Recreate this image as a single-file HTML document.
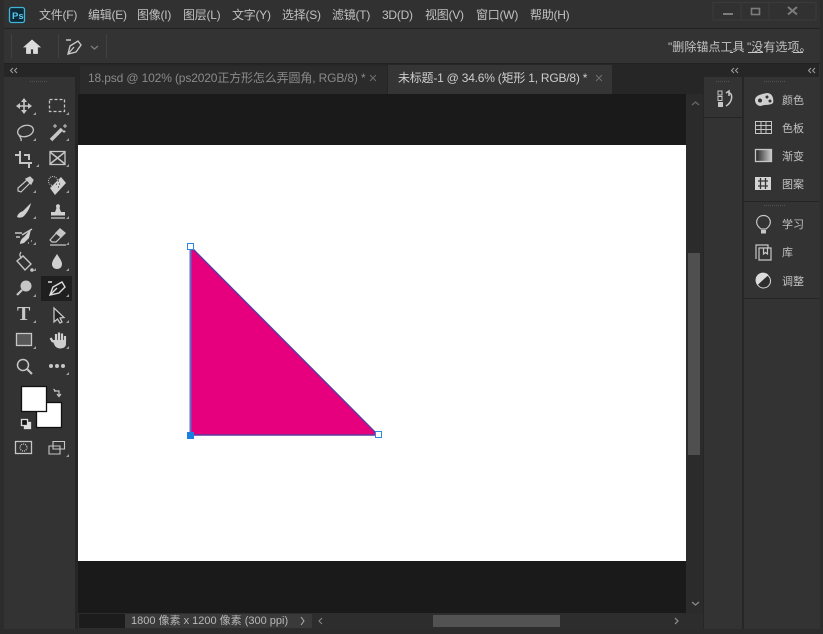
<!DOCTYPE html>
<html><head><meta charset="utf-8"><style>
html,body{margin:0;padding:0;background:#2b2b2b}
#r{position:relative;width:823px;height:634px;overflow:hidden;background:#323232;font-family:"Liberation Sans","Noto Sans CJK SC",sans-serif;color:#c8c8c8}
.a{position:absolute;white-space:nowrap}
.m{top:8px;font-size:12px;line-height:15px;color:#c0c0c0;letter-spacing:-.25px}
.p{left:782px;font-size:11px;line-height:14px;color:#c2c2c2}
svg{position:absolute;left:0;top:0}
</style></head><body><div id="r">
<div class="a" style="left:0;top:0;width:823px;height:28px;background:#313131"></div>
<div class="a" style="left:0;top:28px;width:823px;height:1px;background:#222"></div>
<div class="a" style="left:4px;top:29px;width:815px;height:34px;background:#333"></div>
<div class="a" style="left:0;top:63px;width:823px;height:1px;background:#222"></div>
<div class="a" style="left:0;top:0;width:4px;height:634px;background:#2c2c2c"></div>
<div class="a" style="left:820px;top:0;width:3px;height:634px;background:#2c2c2c"></div>
<div class="a" style="left:0;top:629px;width:823px;height:5px;background:#2c2c2c"></div>

<div class="a" style="left:76px;top:64px;width:628px;height:30px;background:#262626"></div>
<div class="a" style="left:80px;top:66px;width:307px;height:28px;background:#2b2b2b"></div>
<div class="a" style="left:388px;top:65px;width:224px;height:29px;background:#353535"></div>
<div class="a" style="left:4px;top:64px;width:71px;height:13px;background:#262626"></div>
<div class="a" style="left:704px;top:64px;width:38px;height:13px;background:#262626"></div>
<div class="a" style="left:744px;top:64px;width:75px;height:13px;background:#262626"></div>
<div class="a" style="left:4px;top:77px;width:71px;height:552px;background:#333"></div>
<div class="a" style="left:75px;top:64px;width:3px;height:565px;background:#262626"></div>
<div class="a" style="left:78px;top:94px;width:608px;height:519px;background:#1a1a1a"></div>
<div class="a" style="left:78px;top:145px;width:608px;height:416px;background:#fff"></div>
<div class="a" style="left:686px;top:94px;width:17px;height:519px;background:#2b2b2b"></div>
<div class="a" style="left:688px;top:253px;width:12px;height:202px;background:#4f4f4f"></div>
<div class="a" style="left:703px;top:64px;width:1px;height:565px;background:#262626"></div>
<div class="a" style="left:704px;top:77px;width:38px;height:552px;background:#333"></div>
<div class="a" style="left:704px;top:117px;width:38px;height:1px;background:#242424"></div>
<div class="a" style="left:742px;top:64px;width:2px;height:565px;background:#262626"></div>
<div class="a" style="left:744px;top:77px;width:75px;height:552px;background:#333"></div>
<div class="a" style="left:744px;top:201px;width:75px;height:1px;background:#242424"></div>
<div class="a" style="left:744px;top:298px;width:75px;height:1px;background:#242424"></div>
<div class="a" style="left:78px;top:613px;width:625px;height:16px;background:#2d2d2d"></div>
<div class="a" style="left:79px;top:614px;width:46px;height:14px;background:#1c1c1c"></div>
<div class="a" style="left:125px;top:614px;width:187px;height:14px;background:#3a3a3a"></div>
<div class="a" style="left:433px;top:615px;width:127px;height:12px;background:#525252"></div>

<div class="a m" style="left:39px">文件(F)</div>
<div class="a m" style="left:88px">编辑(E)</div>
<div class="a m" style="left:137px">图像(I)</div>
<div class="a m" style="left:183px">图层(L)</div>
<div class="a m" style="left:232px">文字(Y)</div>
<div class="a m" style="left:282px">选择(S)</div>
<div class="a m" style="left:332px">滤镜(T)</div>
<div class="a m" style="left:382px">3D(D)</div>
<div class="a m" style="left:425px">视图(V)</div>
<div class="a m" style="left:476px">窗口(W)</div>
<div class="a m" style="left:530px">帮助(H)</div>
<div class="a" style="left:668px;top:40px;font-size:12px;line-height:15px;color:#c2c2c2;word-spacing:-1px;letter-spacing:.05px">"删除锚点工具 "没有选项。</div>
<div class="a" style="left:88px;top:71px;font-size:12px;line-height:15px;color:#8a8a8a;letter-spacing:-.14px">18.psd @ 102% (ps2020正方形怎么弄圆角, RGB/8) *</div>
<div class="a" style="left:398px;top:71px;font-size:12px;line-height:15px;color:#cdcdcd;letter-spacing:-.22px">未标题-1 @ 34.6% (矩形 1, RGB/8) *</div>
<div class="a" style="left:131px;top:614px;font-size:11px;line-height:15px;color:#b8b8b8">1800 像素 x 1200 像素 (300 ppi)</div>
<div class="a p" style="top:94px">颜色</div>
<div class="a p" style="top:122px">色板</div>
<div class="a p" style="top:150px">渐变</div>
<div class="a p" style="top:178px">图案</div>
<div class="a p" style="top:218px">学习</div>
<div class="a p" style="top:246px">库</div>
<div class="a p" style="top:275px">调整</div>
<div class="a" style="left:17px;top:303px;font:bold 20px 'Liberation Serif',serif;line-height:22px;color:#c8c8c8">T</div>

<svg width="823" height="634" viewBox="0 0 823 634" fill="none" stroke="#c6c6c6" stroke-width="1.3">
<!-- Ps logo -->
<rect x="9.500" y="7.500" width="15" height="15" rx="2" fill="#0e2a38" stroke="#3fb4d8"/>
<text x="12" y="19" font-family="Liberation Sans" font-size="9.500" font-weight="bold" fill="#5cc8ee" stroke="none">Ps</text>
<!-- window -->
<path d="M713 2.500H816V20H713Z" stroke="#3a3a3a"/>
<path d="M741 3V20M769 3V20" stroke="#3a3a3a"/>
<path d="M723 14H733" stroke="#7c7c7c" stroke-width="2"/>
<rect x="751.500" y="8.500" width="8" height="6" stroke="#7c7c7c" stroke-width="1.600"/>
<path d="M788 7L797 14.500M797 7L788 14.500" stroke="#7c7c7c" stroke-width="2"/>
<!-- text underline marks -->
<path d="M748 52.500H763M793 52.500H803M730 52.500H733" stroke="#c8c8c8" stroke-width="1"/>
<!-- separators -->
<path d="M11.500 34V58M58.500 34V58M106.500 34V58" stroke="#404040"/>
<!-- home -->
<path d="M24 47L32 40L40 47H37.500V53.500H33.500V49H30.500V53.500H26.500V47Z" fill="#dcdcdc" stroke="#dcdcdc" stroke-width=".8"/>
<!-- option pen -->
<path d="M66 40H71M68 54L70 46L78 41L81 45L76 52Z" stroke-width="1.400"/><path d="M68 54L74 47"/><path d="M91 46L94.500 49L98 46" stroke="#7d7d7d"/>
<!-- chevrons -->
<g stroke="#a0a0a0" stroke-width="1"><path d="M13 68L10.500 70.500L13 73M17 68L14.500 70.500L17 73"/><path d="M734 68L731.500 70.500L734 73M738 68L735.500 70.500L738 73"/><path d="M811 68L808.500 70.500L811 73M815 68L812.500 70.500L815 73"/></g>
<g stroke="#505050" stroke-dasharray="1 1"><path d="M30 81.500H48M764 81.500H786M716 81.500H730M764 205.500H786"/></g>
<path d="M370 75L376 81M376 75L370 81M596 75L602 81M602 75L596 81" stroke="#6e6e6e" stroke-width="1"/>
<!-- move -->
<path d="M24 99V113M17 106H31" stroke-width="1.600"/><path d="M24 98L21 102H27ZM24 114L21 110H27ZM16 106L20 103V109ZM32 106L28 103V109Z" fill="#c6c6c6" stroke="none"/>
<rect x="49.500" y="99.500" width="15" height="12" stroke-dasharray="3 2"/>
<!-- lasso -->
<ellipse cx="25.500" cy="131" rx="8" ry="5.500" transform="rotate(-15 25.500 131)" stroke-width="1.300"/><path d="M19 135C20 138 22 138 21 141" stroke-width="1.300"/>
<!-- wand -->
<path d="M51 140L62 129" stroke-width="3.500"/>
<path d="M55 124V128M53 126H57M65 124V128M63 126H67M64 130V133M62.500 131.500H65.500" stroke-width="1"/>
<!-- crop -->
<path d="M15 155H20V163H31M20 151V155M24 155H29V160M29 163V168" stroke-width="2"/><path d="M31 162V164" stroke-width="2"/>
<rect x="50" y="151.500" width="15" height="13"/><path d="M50 152L65 164M65 152L50 164" stroke-width="1.500"/>
<!-- eyedropper -->
<path d="M18 191L18 188L27 180L30 183L21 192Z" stroke-width="1.200"/><path d="M26 179L30 177L33 180L31 184Z" fill="#c6c6c6" stroke="#c6c6c6"/>
<!-- heal -->
<path d="M50 188L61 177L66 183L55 195Z" fill="#d0d0d0" stroke="none"/><path d="M56 184h1M59 184h1M58 187h1M58 181h1" stroke="#333" stroke-width="1.200"/><circle cx="53" cy="181" r="4.500" stroke-dasharray="1 1" stroke-width="1"/>
<!-- brush -->
<path d="M17 217C18 213 21 212 23 211L31 203C30 208 27 213 24 216C22 218 19 218 17 217Z" fill="#d0d0d0" stroke="none"/>
<!-- stamp -->
<path d="M51 218H65" stroke-width="1.300"/><path d="M51 212H65V215.500H51Z" fill="#d0d0d0" stroke="none"/><path d="M55 212H61L59.500 208C62 203 54 203 56.500 208Z" fill="#d0d0d0" stroke="none"/>
<!-- history -->
<path d="M22 235L32 229M15 233H22M16 237H20" stroke-width="1.400"/><path d="M24 237L31 229L29 238L24 243L20 244C20 241 22 238 24 237Z" fill="#d0d0d0" stroke="none"/><path d="M28 243h1M31 241h1" stroke-dasharray="1 1"/>
<!-- eraser -->
<path d="M50 240L60 229L65 233L56 242H52ZM50 245H66" stroke-width="1.200"/><path d="M56 233L60 229L65 233L61 237Z" fill="#c6c6c6"/>
<!-- bucket -->
<path d="M17 261L23 256L31 264L25 270Z" stroke-width="1.400"/><path d="M21 252C19 255 20 257 22 258" stroke-width="1.300"/><circle cx="32" cy="270" r="1.800" fill="#c6c6c6" stroke="none"/>
<path d="M57 254C53 260 52 262 52 264C52 267 54 269 57 269C60 269 62 267 62 264C62 262 61 260 57 254Z" fill="#d0d0d0" stroke="none"/>
<!-- pen tool selected -->
<rect x="41" y="276" width="31" height="25" fill="#1f1f1f" stroke="none"/>
<circle cx="26" cy="286" r="5.500" fill="#c6c6c6" stroke="none"/><path d="M22 290L17 295" stroke-width="2.200"/>
<path d="M48 282H52M50 295L53 287L62 282L65 287L59 293ZM50 295L57 288" stroke="#dcdcdc" stroke-width="1.400"/>
<!-- direct select -->
<path d="M54 308L54 322L57.500 319L60 323L62 322L60 318L64 317.500Z" fill="#222" stroke-width="1.300"/>
<rect x="16.500" y="333.500" width="15" height="12" fill="#585858"/>
<!-- hand -->
<path d="M53 342L50.500 338M56 341V334M59 341V332.500M62 341V333.500M65 342V336" stroke="#cfcfcf" stroke-width="2.200"/>
<path d="M52 340H66V344C66 349 58 350 55 346Z" fill="#cfcfcf" stroke="none"/>
<!-- zoom -->
<circle cx="23" cy="365" r="5.500" stroke-width="1.500"/><path d="M27 369L32 374" stroke-width="2"/>
<g fill="#c6c6c6" stroke="none"><circle cx="51" cy="366" r="2"/><circle cx="57" cy="366" r="2"/><circle cx="63" cy="366" r="2"/></g>
<!-- tiny corner arrows -->
<g fill="#9e9e9e" stroke="none">
<path d="M36 115h-3l3-3zM69 115h-3l3-3zM36 141h-3l3-3zM69 141h-3l3-3zM39 167h-3l3-3zM69 167h-3l3-3zM36 193h-3l3-3zM69 193h-3l3-3zM36 219h-3l3-3zM69 219h-3l3-3zM36 245h-3l3-3zM69 245h-3l3-3zM36 271h-3l3-3zM69 271h-3l3-3zM36 297h-3l3-3zM69 297h-3l3-3zM36 323h-3l3-3zM69 323h-3l3-3zM36 349h-3l3-3zM69 349h-3l3-3zM69 375h-3l3-3zM69 457h-3l3-3z"/>
</g>
<!-- colours -->
<rect x="36.500" y="402.500" width="25" height="25" fill="#fff" stroke="#111"/>
<rect x="21.500" y="386.500" width="25" height="25" fill="#fff" stroke="#111"/>
<path d="M54 391H59V396M53.500 389L56 391.500M61 394L59 396.500L57 394" stroke-width="1.200"/>
<rect x="24.500" y="422.500" width="6" height="6" fill="#ddd" stroke="#ddd"/>
<rect x="21.500" y="419.500" width="6" height="6" fill="#111" stroke="#ddd"/>
<rect x="15.500" y="441.500" width="16" height="12"/><circle cx="23.500" cy="447.500" r="3.500" stroke-dasharray="1 1"/>
<path d="M53 446H49V454H60V449H53ZM53 441.500H64.500V449H60V446H53Z" stroke-width="1.100"/>
<!-- panels -->
<path d="M718 91h4v4h-4zM718 96.500h4v4h-4z" stroke-width="1"/><rect x="718" y="102" width="5" height="5" fill="#c6c6c6" stroke="none"/>
<path d="M726 93L729 91L729 96M729 93C733 93 733 102 726 106" stroke-width="1.500"/>
<path d="M755 100C755 95 762 94 767 93C773 93 774 100 773 103C769 106 765 104 761 106C757 106 755 103 755 100Z" fill="#d0d0d0" stroke="none"/>
<g fill="#333" stroke="none"><ellipse cx="760" cy="100.500" rx="2" ry="2"/><circle cx="767" cy="97" r="1.500"/><circle cx="770" cy="101" r="1.500"/></g>
<path d="M755.500 121.500H771.500V133.500H755.500ZM755.500 125.500H771.500M755.500 129.500H771.500M761 121.500V133.500M766 121.500V133.500" stroke-width="1"/>
<defs><linearGradient id="g"><stop offset="0" stop-color="#222"/><stop offset="1" stop-color="#ccc"/></linearGradient></defs>
<rect x="755.500" y="149.500" width="16" height="12" fill="url(#g)" stroke="#c6c6c6"/>
<rect x="755" y="177" width="16" height="13" fill="#d4d4d4" stroke="none"/>
<path d="M758 181H768M758 186H768M760.500 178V189M765.500 178V189" stroke="#333" stroke-width="1.300"/>
<path d="M761 229C757 226 756 223 757 220C759 214 768 214 770 220C771 223 770 226 766 229Z" stroke-width="1.200"/>
<rect x="761" y="230" width="5" height="3.500" fill="#c6c6c6" stroke="none"/>
<path d="M756 259V245H768V248M759 248H771V260H759ZM763.500 248V254L765.500 252.500L767.500 254V248" stroke-width="1.200"/>
<circle cx="763.500" cy="281" r="7" fill="#2e2e2e" stroke="#dcdcdc" stroke-width="1"/>
<path d="M757.500 285L768.500 275A7 7 0 0 0 757.500 285Z" fill="#dcdcdc" stroke="none"/>
<!-- scroll -->
<path d="M692 105L695.500 102L699 105" stroke="#666" stroke-width="1.400"/>
<path d="M692 602L695.500 605L699 602" stroke="#888" stroke-width="1.400"/>
<path d="M301 617L304 621L301 625" stroke="#b0b0b0" stroke-width="1"/>
<path d="M322 618L319 621L322 624" stroke="#888" stroke-width="1"/>
<path d="M675 618L678 621L675 624" stroke="#888" stroke-width="1.300"/>
<!-- triangle -->
<path d="M190.500 246.500V435H378Z" fill="#e6007e" stroke="#5a3aa0" stroke-width="1.400"/>
<path d="M190.500 247V435" stroke="#5a70c8" stroke-width="2"/>
<rect x="187.500" y="243.500" width="6" height="6" fill="#fff" stroke="#2f87e0" stroke-width="1"/>
<rect x="375.500" y="431.500" width="6" height="6" fill="#fff" stroke="#2f87e0" stroke-width="1"/>
<rect x="187" y="432" width="7" height="7" fill="#1a80e0" stroke="none"/>
</svg>
</div></body></html>
